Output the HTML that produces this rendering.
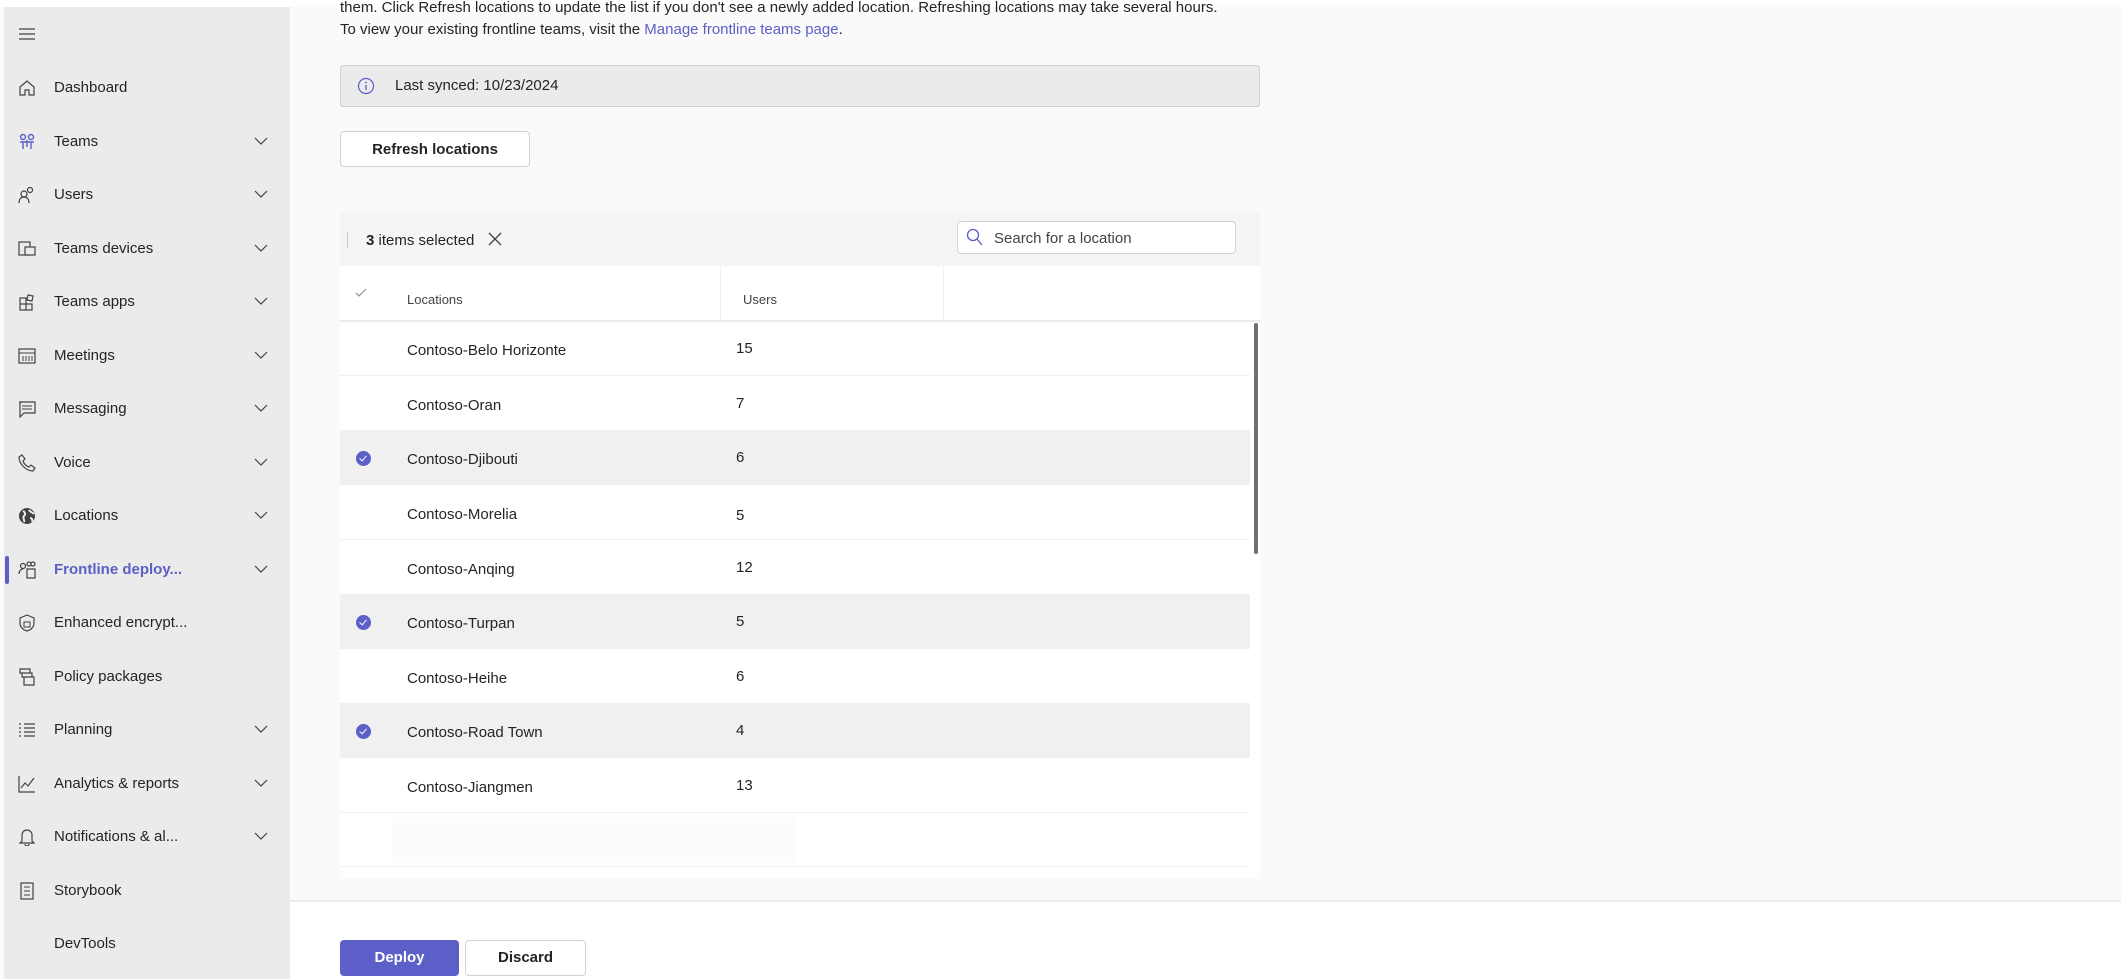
<!DOCTYPE html>
<html><head><meta charset="utf-8"><style>
*{box-sizing:border-box;margin:0;padding:0}
body{width:2125px;height:979px;overflow:hidden;background:#fafafa;font-family:"Liberation Sans",sans-serif;color:#242424;position:relative}
.abs{position:absolute}
#side{left:4px;top:7px;width:286px;height:972px;background:#ebebeb}
.nav{position:absolute;left:0;width:286px;height:30px;font-size:15px;line-height:30px}
.nav .t{position:absolute;left:50px}
.nav svg.i{position:absolute;left:14px;top:6px}
.nav svg.c{position:absolute;left:250px;top:9px}
.row{position:absolute;left:340px;width:910px;height:54px;border-bottom:1px solid #f0f0f0;background:#fff;font-size:15px}
.row.sel{background:#f0f0f0}
.row .n{position:absolute;left:67px;top:20px}
.row .u{position:absolute;left:396px;top:18px}
.row .ck{position:absolute;left:16px;top:20px;width:15px;height:15px;border-radius:50%;background:#5b5fc7}
.row .ck:after{content:"";position:absolute;left:5px;top:3px;width:3px;height:6px;border:solid #fff;border-width:0 1.5px 1.5px 0;transform:rotate(40deg)}
</style></head><body>
<div class="abs" style="left:0;top:0;width:2125px;height:7px;background:#fff"></div>
<div class="abs" id="side">
<svg class="abs" style="left:14px;top:20px" width="18" height="14"><path d="M1 2h16M1 7h16M1 12h16" stroke="#424242" stroke-width="1.3"/></svg>
</div>
<div class="abs" style="left:5px;top:556px;width:4px;height:28px;background:#5b5fc7;border-radius:2px"></div>

<div class="abs" style="left:4px;top:1px">
<div class="nav" style="top:72px"><svg class="i" width="18" height="18"><path d="M2 8L9 2l7 6v8h-5v-5H7v5H2z" fill="none" stroke="#424242" stroke-width="1.2"/></svg><span class="t">Dashboard</span></div>
<div class="nav" style="top:126px"><svg class="i" width="18" height="18"><circle cx="5" cy="4" r="2.5" fill="none" stroke="#5b5fc7" stroke-width="1.4"/><circle cx="13" cy="4" r="2.5" fill="none" stroke="#5b5fc7" stroke-width="1.4"/><path d="M2 9h14M5 9v7M13 9v7M9 7v7" stroke="#5b5fc7" stroke-width="1.4"/></svg><span class="t">Teams</span><svg class="c" width="14" height="10"><path d="M1 2l6 6 6-6" fill="none" stroke="#424242" stroke-width="1.2"/></svg></div>
<div class="nav" style="top:179px"><svg class="i" width="18" height="18"><circle cx="6" cy="8" r="3" fill="none" stroke="#424242" stroke-width="1.2"/><circle cx="12" cy="4" r="2.5" fill="none" stroke="#424242" stroke-width="1.2"/><path d="M1 17c0-4 2-6 5-6s5 2 5 6" fill="none" stroke="#424242" stroke-width="1.2"/></svg><span class="t">Users</span><svg class="c" width="14" height="10"><path d="M1 2l6 6 6-6" fill="none" stroke="#424242" stroke-width="1.2"/></svg></div>
<div class="nav" style="top:233px"><svg class="i" width="18" height="18"><rect x="1" y="2" width="11" height="13" fill="none" stroke="#424242" stroke-width="1.2"/><rect x="7" y="7" width="10" height="8" fill="#ebebeb" stroke="#424242" stroke-width="1.2"/></svg><span class="t">Teams devices</span><svg class="c" width="14" height="10"><path d="M1 2l6 6 6-6" fill="none" stroke="#424242" stroke-width="1.2"/></svg></div>
<div class="nav" style="top:286px"><svg class="i" width="18" height="18"><path d="M2 5h6v12H2zM2 11h12v6H8M10 2l5 1-1 5-5-1z" fill="none" stroke="#424242" stroke-width="1.2"/></svg><span class="t">Teams apps</span><svg class="c" width="14" height="10"><path d="M1 2l6 6 6-6" fill="none" stroke="#424242" stroke-width="1.2"/></svg></div>
<div class="nav" style="top:340px"><svg class="i" width="18" height="18"><rect x="1" y="2" width="16" height="14" fill="none" stroke="#424242" stroke-width="1.2"/><path d="M1 6h16M5 9v5M8 9v5M11 9v5M14 9v5" stroke="#424242" stroke-width="1"/></svg><span class="t">Meetings</span><svg class="c" width="14" height="10"><path d="M1 2l6 6 6-6" fill="none" stroke="#424242" stroke-width="1.2"/></svg></div>
<div class="nav" style="top:393px"><svg class="i" width="18" height="18"><path d="M1 2h16v11H6l-4 4V2z" fill="none" stroke="#424242" stroke-width="1.2"/><path d="M4 6h10M4 9h10" stroke="#424242"/></svg><span class="t">Messaging</span><svg class="c" width="14" height="10"><path d="M1 2l6 6 6-6" fill="none" stroke="#424242" stroke-width="1.2"/></svg></div>
<div class="nav" style="top:447px"><svg class="i" width="18" height="18"><path d="M4 1l3 4-2 2c1 3 3 5 6 6l2-2 4 3-2 3C8 17 1 10 1 3z" fill="none" stroke="#424242" stroke-width="1.2"/></svg><span class="t">Voice</span><svg class="c" width="14" height="10"><path d="M1 2l6 6 6-6" fill="none" stroke="#424242" stroke-width="1.2"/></svg></div>
<div class="nav" style="top:500px"><svg class="i" width="18" height="18"><circle cx="9" cy="9" r="8" fill="#424242"/><path d="M5 4c2 1 3 3 1 5s1 3 0 6M11 3c1 2 3 2 5 4M12 11c2 0 3 2 2 4" stroke="#ebebeb" stroke-width="2" fill="none"/></svg><span class="t">Locations</span><svg class="c" width="14" height="10"><path d="M1 2l6 6 6-6" fill="none" stroke="#424242" stroke-width="1.2"/></svg></div>
<div class="nav" style="top:554px;color:#5b5fc7;font-weight:bold"><svg class="i" width="18" height="18"><circle cx="5" cy="5" r="2.5" fill="none" stroke="#424242" stroke-width="1.2"/><circle cx="11" cy="3" r="2" fill="none" stroke="#424242" stroke-width="1.2"/><circle cx="15" cy="3" r="2" fill="none" stroke="#424242" stroke-width="1.2"/><path d="M1 13c0-3 2-5 4-5M9 8h8v9H9z" fill="none" stroke="#424242" stroke-width="1.2"/></svg><span class="t">Frontline deploy...</span><svg class="c" width="14" height="10"><path d="M1 2l6 6 6-6" fill="none" stroke="#424242" stroke-width="1.2"/></svg></div>
<div class="nav" style="top:607px"><svg class="i" width="18" height="18"><path d="M9 1l7 3v5c0 4-3 7-7 8-4-1-7-4-7-8V4z" fill="none" stroke="#424242" stroke-width="1.2"/><rect x="6" y="8" width="6" height="5" fill="none" stroke="#424242"/></svg><span class="t">Enhanced encrypt...</span></div>
<div class="nav" style="top:661px"><svg class="i" width="18" height="18"><path d="M2 1h10v4H2zM4 5h10v4H4zM6 9h10v8H6z" fill="none" stroke="#424242" stroke-width="1.2"/></svg><span class="t">Policy packages</span></div>
<div class="nav" style="top:714px"><svg class="i" width="18" height="18"><path d="M6 3h11M6 7h11M6 11h11M6 15h11M1 3h2M1 7h2M1 11h2M1 15h2" stroke="#424242" stroke-width="1.2"/></svg><span class="t">Planning</span><svg class="c" width="14" height="10"><path d="M1 2l6 6 6-6" fill="none" stroke="#424242" stroke-width="1.2"/></svg></div>
<div class="nav" style="top:768px"><svg class="i" width="18" height="18"><path d="M1 1v16h16M3 13l4-5 3 3 6-8" fill="none" stroke="#424242" stroke-width="1.2"/></svg><span class="t">Analytics &amp; reports</span><svg class="c" width="14" height="10"><path d="M1 2l6 6 6-6" fill="none" stroke="#424242" stroke-width="1.2"/></svg></div>
<div class="nav" style="top:821px"><svg class="i" width="18" height="18"><path d="M4 13V7a5 5 0 0110 0v6l2 2H2zM7 16a2 2 0 004 0" fill="none" stroke="#424242" stroke-width="1.2"/></svg><span class="t">Notifications &amp; al...</span><svg class="c" width="14" height="10"><path d="M1 2l6 6 6-6" fill="none" stroke="#424242" stroke-width="1.2"/></svg></div>
<div class="nav" style="top:875px"><svg class="i" width="18" height="18"><rect x="3" y="1" width="12" height="16" fill="none" stroke="#424242" stroke-width="1.2"/><path d="M6 5h6M6 9h6M6 13h6" stroke="#424242"/></svg><span class="t">Storybook</span></div>
<div class="nav" style="top:928px"><span class="t">DevTools</span></div>
</div>

<div class="abs" style="left:340px;top:-3px;font-size:15px;line-height:22px;color:#242424;white-space:nowrap">them. Click Refresh locations to update the list if you don't see a newly added location. Refreshing locations may take several hours.<br>To view your existing frontline teams, visit the <span style="color:#5b5fc7">Manage frontline teams page</span>.</div>

<div class="abs" style="left:340px;top:65px;width:920px;height:42px;background:#ebebeb;border:1px solid #d1d1d1;border-radius:3px"></div>
<svg class="abs" style="left:357px;top:77px" width="18" height="18"><circle cx="9" cy="9" r="7.5" fill="none" stroke="#5b5fc7" stroke-width="1.2"/><path d="M9 8v5" stroke="#5b5fc7" stroke-width="1.3"/><circle cx="9" cy="5.5" r="0.9" fill="#5b5fc7"/></svg>
<div class="abs" style="left:395px;top:77px;font-size:15px">Last synced: 10/23/2024</div>

<div class="abs" style="left:340px;top:131px;width:190px;height:36px;background:#fff;border:1px solid #d1d1d1;border-radius:4px;font-size:15px;font-weight:bold;text-align:center;line-height:36px">Refresh locations</div>

<div class="abs" style="left:340px;top:211px;width:920px;height:667px;background:#fff"></div>
<div class="abs" style="left:340px;top:211px;width:920px;height:55px;background:#f5f5f5"></div>
<div class="abs" style="left:347px;top:232px;width:1px;height:16px;background:#c8c8c8"></div>
<div class="abs" style="left:366px;top:232px;font-size:15px"><b>3</b> items selected</div>
<svg class="abs" style="left:488px;top:232px" width="14" height="14"><path d="M1 1l12 12M13 1L1 13" stroke="#424242" stroke-width="1.3"/></svg>
<div class="abs" style="left:957px;top:221px;width:279px;height:33px;background:#fff;border:1px solid #d1d1d1;border-radius:4px"></div>
<svg class="abs" style="left:966px;top:228px" width="18" height="20"><circle cx="7" cy="7" r="5.5" fill="none" stroke="#5b5fc7" stroke-width="1.3"/><path d="M11 11l5 6" stroke="#5b5fc7" stroke-width="1.3"/></svg>
<div class="abs" style="left:994px;top:230px;font-size:15px;color:#424242">Search for a location</div>

<div class="abs" style="left:340px;top:266px;width:920px;height:56px;background:#fff;border-bottom:2px solid #ebebeb"></div>
<div class="abs" style="left:720px;top:266px;width:1px;height:55px;background:#f0f0f0"></div>
<div class="abs" style="left:943px;top:266px;width:1px;height:55px;background:#f0f0f0"></div>
<svg class="abs" style="left:355px;top:288px" width="12" height="10"><path d="M1 5l3 3 7-7" fill="none" stroke="#888" stroke-width="1"/></svg>
<div class="abs" style="left:407px;top:292px;font-size:13px;color:#424242">Locations</div>
<div class="abs" style="left:743px;top:292px;font-size:13px;color:#424242">Users</div>

<div class="row" style="top:322px"><span class="n">Contoso-Belo Horizonte</span><span class="u">15</span></div>
<div class="row" style="top:377px"><span class="n">Contoso-Oran</span><span class="u">7</span></div>
<div class="row sel" style="top:431px"><span class="ck"></span><span class="n">Contoso-Djibouti</span><span class="u">6</span></div>
<div class="row" style="top:486px"><span class="n">Contoso-Morelia</span><span class="u" style="top:21px">5</span></div>
<div class="row" style="top:541px"><span class="n">Contoso-Anqing</span><span class="u">12</span></div>
<div class="row sel" style="top:595px"><span class="ck"></span><span class="n">Contoso-Turpan</span><span class="u">5</span></div>
<div class="row" style="top:650px"><span class="n">Contoso-Heihe</span><span class="u">6</span></div>
<div class="row sel" style="top:704px"><span class="ck"></span><span class="n">Contoso-Road Town</span><span class="u">4</span></div>
<div class="row" style="top:759px"><span class="n">Contoso-Jiangmen</span><span class="u">13</span></div>
<div class="row" style="top:813px"><div class="abs" style="left:52px;top:4px;width:405px;height:46px;background:#fcfcfc"></div></div>
<div class="abs" style="left:1254px;top:323px;width:4px;height:231px;background:#707070;border-radius:2px"></div>

<div class="abs" style="left:290px;top:900px;width:1831px;height:79px;background:#fff;border-top:2px solid #ebebeb"></div>
<div class="abs" style="left:340px;top:940px;width:119px;height:36px;background:#5b5fc7;border-radius:4px;color:#fff;font-size:15px;font-weight:bold;text-align:center;line-height:36px">Deploy</div>
<div class="abs" style="left:465px;top:940px;width:121px;height:36px;background:#fff;border:1px solid #d1d1d1;border-radius:4px;font-size:15px;font-weight:bold;text-align:center;line-height:34px">Discard</div>
<div class="abs" style="left:2121px;top:0;width:4px;height:979px;background:#fff"></div>
</body></html>
